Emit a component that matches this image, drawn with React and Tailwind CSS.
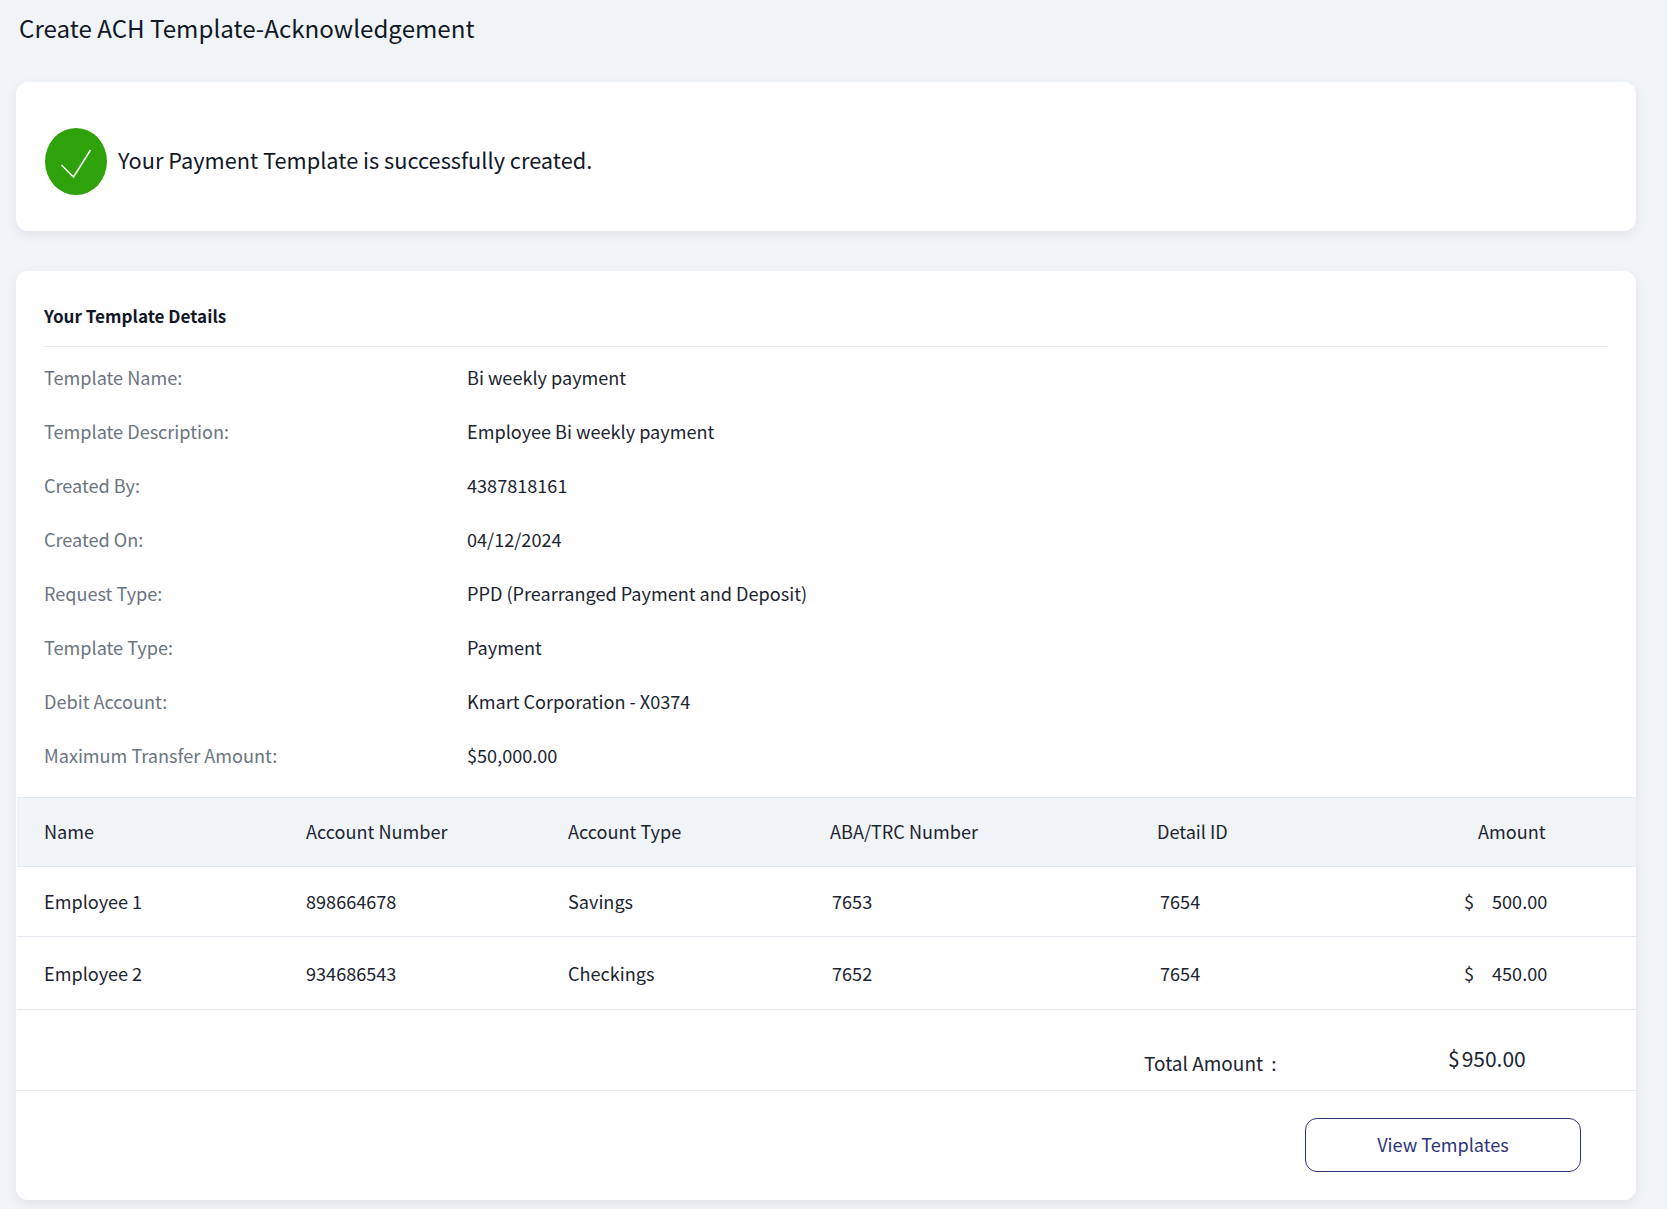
import React from 'react';

const FONT = "font-['Noto_Sans_CJK_SC','Noto_Sans',sans-serif]";

const details = [
  ['Template Name:', 'Bi weekly payment'],
  ['Template Description:', 'Employee Bi weekly payment'],
  ['Created By:', '4387818161'],
  ['Created On:', '04/12/2024'],
  ['Request Type:', 'PPD (Prearranged Payment and Deposit)'],
  ['Template Type:', 'Payment'],
  ['Debit Account:', 'Kmart Corporation - X0374'],
  ['Maximum Transfer Amount:', '$50,000.00'],
];

const employees = [
  { name: 'Employee 1', account: '898664678', type: 'Savings', aba: '7653', detail: '7654', amount: '500.00' },
  { name: 'Employee 2', account: '934686543', type: 'Checkings', aba: '7652', detail: '7654', amount: '450.00' },
];

function Row({ className, children }) {
  return <div className={`flex items-center border-b border-[#e4e9f0] pl-[27px] ${className}`}>{children}</div>;
}

export default function App() {
  return (
    <div className={`${FONT} min-h-[1209px] bg-[#f1f4f7] pl-[16px] pr-[31px] text-[#1b2430]`}>
      <h1 className="pl-[3px] pt-[9px] pb-[1px] text-[24.15px] leading-[38px] font-normal text-[#111827]">
        Create ACH Template-Acknowledgement
      </h1>

      {/* success banner */}
      <section className="mt-[34px] flex h-[149px] items-center rounded-[12px] bg-white pl-[29px] pt-[9px] shadow-[0_4px_12px_rgba(40,60,90,0.08)]">
        <svg width="62" height="67" viewBox="0 0 62 67" className="shrink-0">
          <ellipse cx="31" cy="33.5" rx="31" ry="33.5" fill="#2fa10b" />
          <path d="M16.5 37 L28.5 49 L45.5 22" fill="none" stroke="#fff" strokeWidth="1.5" />
        </svg>
        <span className="ml-[11px] -mt-[2px] text-[21.75px] leading-[32px] text-[#111827]">Your Payment Template is successfully created.</span>
      </section>

      {/* template details */}
      <section className="mt-[40px] rounded-[12px] bg-white pb-[28px] shadow-[0_4px_12px_rgba(40,60,90,0.08)]">
        <div className="px-[28px]">
          <h2 className="flex h-[76px] items-end border-b border-[#e4e9f0] pb-[16px] text-[17.1px] leading-[28px] font-semibold text-[#111827]">
            Your Template Details
          </h2>
          <div className="pt-[4px]">
            {details.map(([label, value]) => (
              <div key={label} className="flex h-[54px] items-center text-[18.1px]">
                <span className="w-[423px] shrink-0 text-[#6b7480]">{label}</span>
                <span>{value}</span>
              </div>
            ))}
          </div>
        </div>

        <div className="ml-[1px] mt-[14px] text-[18.1px]">
          <Row className="h-[70px] border-t bg-[#f1f4f7] pb-[1px]">
            <span className="w-[262px]">Name</span>
            <span className="w-[262px]">Account Number</span>
            <span className="w-[262px]">Account Type</span>
            <span className="w-[327px]">ABA/TRC Number</span>
            <span className="w-[321px]">Detail ID</span>
            <span className="w-[67px] text-right">Amount</span>
          </Row>
          {employees.map((e, i) => (
            <Row key={e.name} className={i === 0 ? 'h-[70px]' : 'h-[73px] pt-[1px]'}>
              <span className="w-[262px]">{e.name}</span>
              <span className="w-[262px]">{e.account}</span>
              <span className="w-[262px]">{e.type}</span>
              <span className="w-[327px] pl-[2px]">{e.aba}</span>
              <span className="w-[307px] pl-[3px]">{e.detail}</span>
              <span className="w-[28px]">$</span>
              <span>{e.amount}</span>
            </Row>
          ))}
          <Row className="h-[81px]">
            <div className="ml-[1100px] flex w-[304px] pt-[26px] text-[19px]">
              <span>Total Amount</span>
              <span className="ml-[8px]">:</span>
            </div>
            <div className="flex gap-[2px] pt-[18px] text-[21px]">
              <span>$</span>
              <span>950.00</span>
            </div>
          </Row>
        </div>

        <div className="flex justify-end pr-[55px] pt-[27px]">
          <button className="h-[54px] w-[276px] rounded-[12px] border border-[#2e3478] pb-[1px] text-[18.1px] text-[#2e3478]">
            View Templates
          </button>
        </div>
      </section>
    </div>
  );
}
